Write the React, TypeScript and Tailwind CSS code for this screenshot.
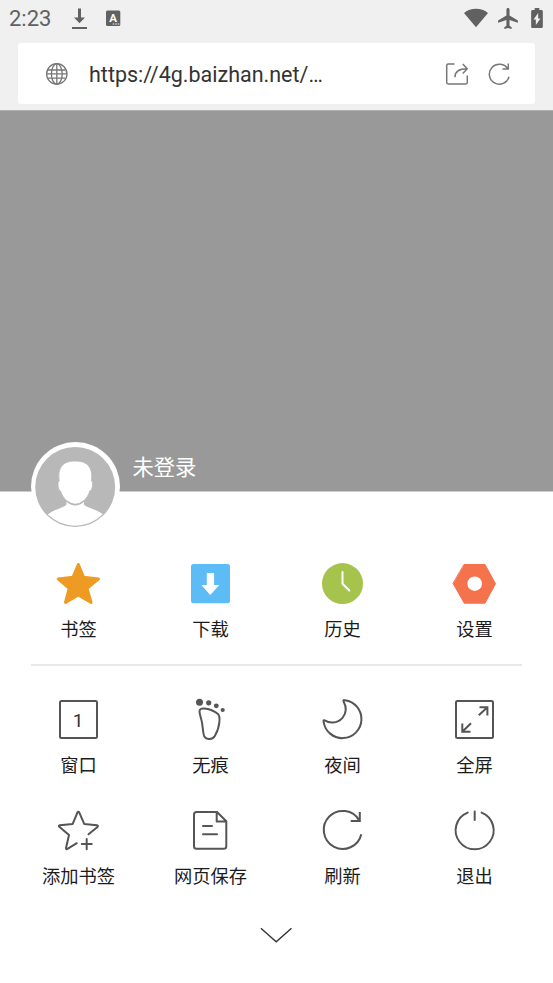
import React from 'react';

interface MenuItemProps {
  label: string;
  children: React.ReactNode;
}

const MenuItem: React.FC<MenuItemProps> = ({ label, children }) => (
  <button className="flex flex-col items-center gap-[10px]">
    <svg
      className="h-12 w-12"
      viewBox="0 0 48 48"
      fill="none"
      stroke="#555555"
      strokeWidth="2"
      strokeLinecap="round"
      strokeLinejoin="round"
    >
      {children}
    </svg>
    <span className="h-6 whitespace-nowrap pl-px text-[18.3px] leading-6 text-[#1c1c1c]">{label}</span>
  </button>
);

const StatusBar = () => (
  <div className="flex h-[43px] items-start pl-[9px] pr-[9px] pt-[7px] text-[#616161]">
    <span className="w-[43px] font-['Roboto',sans-serif] text-[22px] leading-6">2:23</span>
    <svg className="ml-[19px] h-[23px] w-4" viewBox="0 0 16 23" fill="currentColor">
      <path d="M7 1.5h3v9h4L8.5 16.2 3 10.5h4zM1 20h15v2H1z" />
    </svg>
    <svg className="ml-[18px] mt-[3px] h-[17px] w-4" viewBox="0 0 16 17">
      <rect x="1" y="0.5" width="14.3" height="15.6" rx="1.5" fill="#616161" />
      <text x="8.1" y="11.5" textAnchor="middle" fill="#fff" fontFamily="Roboto, sans-serif" fontSize="11.5" fontWeight="700">
        A
      </text>
      <path d="M7.700 14h1.500M10.300 14h1.500M12.700 14h1.500" stroke="#fff" strokeWidth="1.2" />
    </svg>
    <svg className="ml-auto mt-px h-5 w-6" viewBox="0 0 24 20" fill="currentColor">
      <path d="M0 5C3.5 2.200 7.600.8 12 .8S20.500 2.200 24 5L12 19.300z" />
    </svg>
    <svg className="ml-[8px] -mt-px h-[25px] w-[25px]" viewBox="0 0 24 24" fill="currentColor">
      <path d="M21 16v-2l-8-5V3.500c0-.83-.67-1.500-1.500-1.500S10 2.670 10 3.500V9l-8 5v2l8-2.500V19l-2 1.500V22l3.500-1 3.500 1v-1.500L13 19v-5.500l8 2.500z" />
    </svg>
    <svg className="ml-[9px] mt-px h-[20px] w-[14px]" viewBox="6 2 12 20" preserveAspectRatio="none" fill="currentColor">
      <path d="M15.670 4H14V2h-4v2H8.330C7.600 4 7 4.600 7 5.330v15.330C7 21.400 7.600 22 8.330 22h7.330c.74 0 1.340-.6 1.340-1.330V5.330C17 4.600 16.400 4 15.670 4zM11 19v-5.500H9L13 7v5.500h2L11 19z" />
    </svg>
  </div>
);

const AddressBar = () => (
  <div className="mx-[18px] flex h-[61px] items-center rounded-[3px] bg-white pl-[27px] pr-[24px]">
    <svg className="h-6 w-6" viewBox="0 0 24 24" fill="none" stroke="#777777" strokeWidth="1.3">
      <circle cx="11.8" cy="11.9" r="10.2" />
      <ellipse cx="11.8" cy="11.9" rx="5.4" ry="10.2" />
      <path d="M11.8 1.700v20.400M1.600 11.900H22M3 8h17.600M3 16.200h17.600" />
    </svg>
    <span className="ml-5 mt-0.5 font-['Roboto',sans-serif] text-[21.5px] leading-7 text-[#333333]">
      https://4g.baizhan.net/…
    </span>
    <svg className="ml-auto h-6 w-6" viewBox="0 0 24 24" fill="none" stroke="#777777" strokeWidth="1.5">
      <path d="M9.500 2H3.200Q1.700 2 1.700 3.500v17.100Q1.700 22 3.200 22H20.800Q22.300 22 22.300 20.600V13.500" />
      <path d="M9.900 15.300C9.900 9.500 13.500 6.700 22 6.700M17.800 2l4.400 4.700-4.400 4.700" />
    </svg>
    <svg className="ml-[18px] h-6 w-6" viewBox="0 0 24 24" fill="none" stroke="#777777" strokeWidth="1.5">
      <path d="M20.900 7A10 10 0 1 0 22 14.800M21.300 1.500v5.500h-5.800" />
    </svg>
  </div>
);

const Avatar = () => (
  <svg className="absolute left-[31px] top-[-50px] h-[89px] w-[89px]" viewBox="0 0 89 89">
    <defs>
      <clipPath id="avatar-clip">
        <circle cx="44.2" cy="45.2" r="38.5" />
      </clipPath>
    </defs>
    <circle cx="44.5" cy="44.5" r="44.5" fill="#fff" />
    <circle cx="44.2" cy="45" r="40" fill="#b8b8b8" />
    <g clipPath="url(#avatar-clip)" fill="#fff">
      <path d="M35.500 58v4.500C33 66 22 67 14 75V89H75V75C67 67 55.500 66 53 62.500V58z" />
      <path
        d="M28.200 39C26.500 26 31 19 44.200 19S62 26 60.500 39C62.800 39.500 61.500 48.500 58.800 49C56.500 57 50 62.300 44.200 62.300S32 57 29.500 49C27 48.500 26 39.500 28.200 39z"
        stroke="#b8b8b8"
        strokeWidth="0.8"
      />
      <path d="M35.500 59q8.700 7.500 17.500 0" fill="none" stroke="#b8b8b8" strokeWidth="1.5" />
    </g>
  </svg>
);

const App: React.FC = () => {
  return (
    <div className="flex h-[983px] w-[553px] flex-col overflow-hidden bg-white font-['Roboto','Noto_Sans_CJK_SC',sans-serif]">
      <header className="h-[110px] shrink-0 bg-[#f0f0f0]">
        <StatusBar />
        <AddressBar />
      </header>

      {/* dimmed page behind the menu */}
      <div className="flex h-[382px] shrink-0 items-end border-b border-t border-b-[#cccccc] border-t-[#b0b0b0] bg-[#999999] pb-[9px] pl-[132.5px]">
        <span className="text-[21.3px] leading-7 text-white">未登录</span>
      </div>

      <section className="relative flex-1 bg-white pt-[68px]">
        <Avatar />

        <div className="ml-3 grid w-[528px] grid-cols-4">
          <MenuItem label="书签">
            <path
              d="M24.300 4.500L29.600 17.300L44.500 18.900L33 28.400L37.100 42.500L24.300 35L11.500 42.500L15.200 28.400L4.200 18.900L19 17.300Z"
              fill="#ed9b22"
              stroke="#ed9b22"
              strokeWidth="3"
            />
          </MenuItem>
          <MenuItem label="下载">
            <rect x="5" y="4" width="39" height="39.3" rx="2.5" fill="#5dbcf5" stroke="none" />
            <path d="M20.800 13h7.300v12h5.200l-9 10-9-10h5.500z" fill="#fff" stroke="none" />
          </MenuItem>
          <MenuItem label="历史">
            <circle cx="24.5" cy="23.6" r="20.5" fill="#a6c34e" stroke="none" />
            <path d="M24.500 12v11.700l6.800 6.800" stroke="#fff" />
          </MenuItem>
          <MenuItem label="设置">
            <path
              d="M14.300 4.500H35L45.500 23.700L35 43.200H14.300L3.200 23.700Z"
              fill="#f4734d"
              stroke="#f4734d"
              strokeWidth="1"
            />
            <circle cx="24.7" cy="23.7" r="7.3" fill="#fff" stroke="none" />
          </MenuItem>
        </div>

        <div className="mx-[31px] mt-[22px] h-[2px] bg-[#e9e9e9]" />

        <div className="ml-3 mt-[30px] grid w-[528px] grid-cols-4 gap-y-[29px]">
          <MenuItem label="窗口">
            <rect x="6" y="5" width="37" height="37" rx="1.5" />
            <text
              x="24"
              y="30.7"
              textAnchor="middle"
              fill="#333"
              stroke="none"
              fontFamily="Roboto, sans-serif"
              fontSize="19"
            >
              1
            </text>
          </MenuItem>
          <MenuItem label="无痕">
            <g fill="#555555" stroke="none">
              <circle cx="13.5" cy="6.2" r="3.5" />
              <circle cx="22.7" cy="6.8" r="2.6" />
              <circle cx="30.3" cy="9.8" r="2.4" />
              <circle cx="36.7" cy="14" r="2.1" />
            </g>
            <path d="M13.500 15.500C13.500 13 15.300 12.300 18 12.500C23 12.900 29 15.500 32 18C34 19.800 33.700 23 33.300 26.500C32.800 31.500 31 36.500 28.800 40C26.800 43.600 20.500 44 18.300 40.500C16.500 36 17 29 15.300 23.500C14.500 20.500 13.600 18 13.500 15.500Z" />
          </MenuItem>
          <MenuItem label="夜间">
            <path d="M27 4.300Q25 3.600 25.500 5.200Q30.500 14.500 24.500 21.800C19 28 11 27.200 6.700 24.300Q5.300 23.700 5.600 25.500A19 19 0 1 0 27 4.300Z" />
          </MenuItem>
          <MenuItem label="全屏">
            <rect x="6" y="5" width="37" height="37" rx="1.5" />
            <path
              d="M29.500 11.200H37.400V19.500M37.400 11.200L28.800 19.300M12.300 27.500V35.700H20.500M12.300 35.700L21 27.300"
              strokeLinecap="butt"
              strokeLinejoin="miter"
            />
          </MenuItem>
          <MenuItem label="添加书签">
            <path d="M34.500 27.300L43.500 20Q44.500 18.600 43 18.300L30.200 16.900L25.200 5.300Q24.300 4 23.500 5.300L18.700 16.900L5.800 18.300Q4.300 18.700 5.300 19.800L15 28L12 41Q12 42.700 13.500 41.900L22.800 36.200M27.800 37H37.700M32.700 32V42.300" />
          </MenuItem>
          <MenuItem label="网页保存">
            <path d="M31 5H10.500Q8 5 8 7.500V39.300Q8 41.800 10.500 41.800H37.800Q40.300 41.800 40.300 39.300V14.300ZM30.700 5V14.500H40.300M17 19H26M17 27.300H31" />
          </MenuItem>
          <MenuItem label="刷新">
            <path
              d="M41.300 13.500A19 19 0 1 0 43.300 27.200M41.800 5V14H32.700"
              strokeLinecap="butt"
              strokeLinejoin="miter"
            />
          </MenuItem>
          <MenuItem label="退出">
            <path d="M17.700 5.600A19 19 0 1 0 31.600 5.600M24.700 4.500V13" />
          </MenuItem>
        </div>

        <div className="mt-[37px] flex justify-center pr-px">
          <svg className="h-5 w-9" viewBox="0 0 36 20" fill="none" stroke="#333333" strokeWidth="1.4">
            <path d="M2.900 2.300L18.200 15.800L33.500 2.300" />
          </svg>
        </div>
      </section>
    </div>
  );
};

export default App;
